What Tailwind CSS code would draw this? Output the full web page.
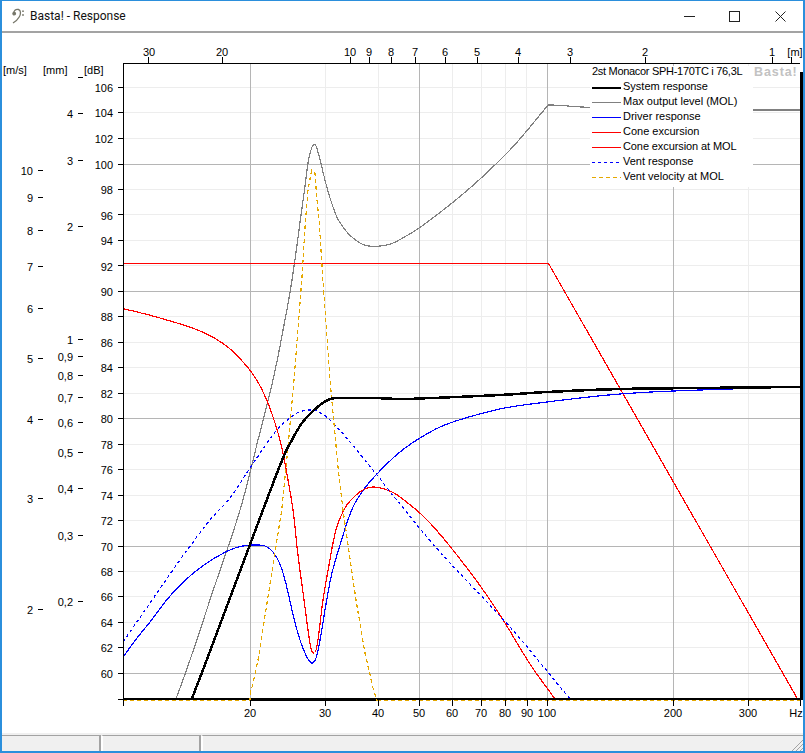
<!DOCTYPE html>
<html>
<head>
<meta charset="utf-8">
<script src="https://cdn.jsdelivr.net/npm/@tailwindcss/browser@4"></script>
<title>Basta! - Response</title>
</head>
<body class="bg-white">
<div class="w-[805px] h-[753px] flex flex-col overflow-hidden border-x-2 border-t border-b-2 border-[#2b8fdc] bg-white font-['Liberation_Sans',sans-serif] text-black">
  <header class="h-[30px] shrink-0 flex items-center border-b-2 border-[#a3a3a3] box-content">
    <svg class="ml-[9px] w-[14px] h-[16px]" viewBox="0 0 14 16" fill="none" stroke="#77776a" stroke-width="1.3"><path d="M3 6 C2 2.5 5 .8 7.5 1.5 C10 2.2 10 6 8.2 9 C6.5 12 4.5 13.5 2 15"/><circle cx="3.2" cy="5.6" r="1.3" fill="#77776a"/><circle cx="12" cy="3.2" r="0.9" fill="#77776a" stroke="none"/><circle cx="12" cy="7" r="0.9" fill="#77776a" stroke="none"/></svg>
    <span class="ml-[5px] text-[12px] font-['Roboto',sans-serif] text-[#111]">Basta! - Response</span>
    <div class="ml-auto flex items-center">
      <svg class="w-[11px] h-[11px] mr-[34px]" viewBox="0 0 11 11"><path d="M0 5.5H11" stroke="#222" shape-rendering="crispEdges"/></svg>
      <svg class="w-[11px] h-[11px] mr-[35px]" viewBox="0 0 11 11"><rect x=".5" y=".5" width="10" height="10" fill="none" stroke="#222" shape-rendering="crispEdges"/></svg>
      <svg class="w-[11px] h-[11px] mr-[17px]" viewBox="0 0 11 11"><path d="M.5 .5L10.5 10.5M10.5 .5L.5 10.5" stroke="#222"/></svg>
    </div>
  </header>
  <main class="flex-1 min-h-0 relative">
    <svg class="block w-[801px] h-[733px] -ml-[2px] -mt-[33px] text-[11px] overflow-visible" viewBox="0 0 801 733">
      <g fill="none" shape-rendering="crispEdges">
        <path stroke="#ededed" d="M123 112.5H800M123 138H800M123 189H800M123 214.5H800M123 240H800M123 265.5H800M123 316.5H800M123 342H800M123 367.5H800M123 393H800M123 444H800M123 469.5H800M123 495H800M123 520.5H800M123 571H800M123 596.5H800M123 622H800M123 647.5H800M123 87.5H800M325.5 63V699M378.5 63V699M452.5 63V699M481 63V699M505.5 63V699M526.5 63V699M748 63V699"/>
        <path stroke="#b5b5b5" d="M123 164H800M123 291H800M123 418.5H800M123 546H800M123 673H800M250.5 63V699M419.5 63V699M547 63V699M673.5 63V699"/>
      </g>
      <g fill="none" shape-rendering="crispEdges" stroke-linejoin="round" stroke-width="1.2">
        <polyline data-smooth stroke="#808080" points="176,699 190,660 215,585 240,510 258,440 273,380 284,325 292,280 301.7,210 305,186 308,163 310,154 312,147 314.3,144.3 316.5,147 318,152 321.7,166.7 326.7,186.7 331,201 336.7,216.7 341,224 346.7,231.7 353,238 360,243 366,245.5 373.3,246.3 380,246 386.7,245 393,243 400,239.5 419,228 452,203 480,179 505,155 522,136.5 546.7,106.7"/>
        <polyline stroke="#808080" points="546.7,106.7 548,105 563,105.3 570,106.3 590,107.5"/>
        <polyline stroke="#808080" points="753,110 800,110"/>
        <polyline stroke="#f00" points="123,263.5 548.5,263.5 797,698"/>
        <polyline data-smooth stroke="#00f" points="123,657 137,638 150,622 170,596 190,576 210,561 230,550 243,546 255,545 265,546 272,551 279,562 285,580 292,610 297,630 301,643 305,653 308,659 312,663 316,658 320,640 326.7,600 332,573 340,545 351.7,510 362,492 376,475 400,452 425,435 450,423 500,409 547,402 620,394 700,390 800,387"/>
        <polyline data-smooth stroke="#f00" points="123,308.5 160,318 200,331 225,345 243,362 256.7,380 266.7,400 273,417 278,433 283,453 288,480 293,510 298,555 304,600 308,630 311,648 313,653 316,650 319,632 323,600 329,565 336,530 345,508 354,497 363,490 373,487 387,490 400,497 430,523 470,572 500,615 530,664 555,699"/>
        <polyline data-smooth stroke="#00f" stroke-dasharray="3 3" points="123,642 150,603 180,560 210,520 230,498 250,468 276.7,430 290,418 300,411.7 313,410 322,414 330,420 346.7,438 373,470 396.7,500 440,552 510,627 570,699"/>
        <path stroke="#000" stroke-width="2" d="M123 699H801"/>
        <path stroke="#000" d="M250 700.5H376"/>
        <polyline stroke="#e5a800" stroke-dasharray="4 3" points="123,700.5 250,700.5 250,695 255,675 258,660 281.7,510 288,447 294,380 302,277 305,227 308,190 311.7,170 315,173 316.7,197 319.3,223 322.7,277 330,380 338,467 343,510 356,600 365,653 373,688 376.7,700.5"/>
        <polyline stroke="#e5a800" stroke-dasharray="4 3" points="376.7,700.5 800,700.5"/>
        <polyline data-smooth stroke="#000" stroke-width="2.5" points="191.7,699 206.7,660 263,510 283,458 293,438 302,423 311,413 320,405 328,400 337,398 373,398 400,399 420,398.5 500,395 547,392 620,389 700,388 800,387"/>
        <path stroke="#000" stroke-width="3" d="M801 72V700"/>
      </g>
      <rect x="590" y="66" width="163" height="121" fill="#fff"/>
      <path fill="none" stroke="#000" shape-rendering="crispEdges" d="M123.5 63V706M123 63H800M148.5 57V63M222.5 57V63M350.5 57V63M369.5 57V63M391.5 57V63M415.5 57V63M445.5 57V63M477.5 57V63M518.5 57V63M570.5 57V63M645.5 57V63M772.5 57V63M791.5 57V63M250.5 700V706M325.5 700V706M378.5 700V706M419.5 700V706M452.5 700V706M481.5 700V706M505.5 700V706M527.5 700V706M547.5 700V706M673.5 700V706M748.5 700V706M800.5 700V706M118 87.5H123M118 112.5H123M118 138.5H123M118 164.5H123M118 189.5H123M118 214.5H123M118 240.5H123M118 265.5H123M118 291.5H123M118 316.5H123M118 342.5H123M118 367.5H123M118 393.5H123M118 418.5H123M118 444.5H123M118 469.5H123M118 495.5H123M118 520.5H123M118 546.5H123M118 571.5H123M118 596.5H123M118 622.5H123M118 647.5H123M118 673.5H123M118 699.5H123M78 113.5H83M78 160.5H83M78 226.5H83M78 339.5H83M78 356.5H83M78 375.5H83M78 397.5H83M78 422.5H83M78 452.5H83M78 488.5H83M78 535.5H83M78 601.5H83M38 170.5H43M38 197.5H43M38 230.5H43M38 266.5H43M38 308.5H43M38 358.5H43M38 419.5H43M38 498.5H43M38 609.5H43M78 77.5H83"/>
      <g fill="#000" text-anchor="end" transform="translate(0 1)">
        <text x="113" y="91">106</text><text x="113" y="116">104</text><text x="113" y="142">102</text><text x="113" y="168">100</text><text x="113" y="193">98</text><text x="113" y="219">96</text><text x="113" y="244">94</text><text x="113" y="270">92</text><text x="113" y="295">90</text><text x="113" y="320">88</text><text x="113" y="346">86</text><text x="113" y="371">84</text><text x="113" y="397">82</text><text x="113" y="422">80</text><text x="113" y="448">78</text><text x="113" y="473">76</text><text x="113" y="499">74</text><text x="113" y="524">72</text><text x="113" y="550">70</text><text x="113" y="575">68</text><text x="113" y="600">66</text><text x="113" y="626">64</text><text x="113" y="651">62</text><text x="113" y="677">60</text>
        <text x="73" y="117">4</text><text x="73" y="164">3</text><text x="73" y="230">2</text><text x="73" y="343">1</text><text x="73" y="360">0,9</text><text x="73" y="379">0,8</text><text x="73" y="401">0,7</text><text x="73" y="426">0,6</text><text x="73" y="456">0,5</text><text x="73" y="492">0,4</text><text x="73" y="539">0,3</text><text x="73" y="605">0,2</text>
        <text x="33" y="174">10</text><text x="33" y="201">9</text><text x="33" y="234">8</text><text x="33" y="270">7</text><text x="33" y="312">6</text><text x="33" y="362">5</text><text x="33" y="423">4</text><text x="33" y="502">3</text><text x="33" y="613">2</text>
      </g>
      <g fill="#000" text-anchor="middle">
        <text x="149" y="56">30</text><text x="222" y="56">20</text><text x="350" y="56">10</text><text x="369" y="56">9</text><text x="391" y="56">8</text><text x="415" y="56">7</text><text x="445" y="56">6</text><text x="477" y="56">5</text><text x="518" y="56">4</text><text x="570" y="56">3</text><text x="645" y="56">2</text><text x="772" y="56">1</text><text x="795" y="56">[m]</text>
        <text x="250" y="717">20</text><text x="325" y="717">30</text><text x="378" y="717">40</text><text x="419" y="717">50</text><text x="452" y="717">60</text><text x="481" y="717">70</text><text x="505" y="717">80</text><text x="527" y="717">90</text><text x="547" y="717">100</text><text x="673" y="717">200</text><text x="748" y="717">300</text><text x="796" y="717">Hz</text>
      </g>
      <g fill="#000">
        <text x="3" y="74">[m/s]</text><text x="43" y="74">[mm]</text><text x="84" y="74">[dB]</text>
        <text x="592" y="75" letter-spacing="-0.3">2st Monacor SPH-170TC i 76,3L</text>
        <text x="623" y="90">System response</text><text x="623" y="105">Max output level (MOL)</text><text x="623" y="120">Driver response</text><text x="623" y="135">Cone excursion</text><text x="623" y="150" letter-spacing="-0.1">Cone excursion at MOL</text><text x="623" y="165">Vent response</text><text x="623" y="180">Vent velocity at MOL</text>
      </g>
      <text x="754" y="76" fill="#c2c2c2" font-weight="700" font-size="12.5" letter-spacing="0.9">Basta!</text>
      <g fill="none" shape-rendering="crispEdges">
        <path stroke="#000" stroke-width="2" d="M592 87.5H621"/>
        <path stroke="#808080" d="M592 102.5H621"/>
        <path stroke="#00f" d="M592 117.5H621"/>
        <path stroke="#f00" d="M592 132.5H621M592 147.5H621"/>
        <path stroke="#00f" stroke-dasharray="3 3" d="M592 162.5H621"/>
        <path stroke="#e5a800" stroke-dasharray="4 3" d="M592 177.5H621"/>
      </g>
    </svg>
  </main>
  <footer class="absolute left-[2px] top-[733px] w-[801px] h-[18px] flex bg-[#f0f0f0] pt-[2px]">
    <div class="w-[99px] border-t border-r-2 border-[#a3a3a3]"></div>
    <div class="w-[100px] border-t border-r-2 border-l-2 border-[#a3a3a3] border-l-white"></div>
    <div class="flex-1 border-t border-l-2 border-[#a3a3a3] border-l-white"></div>
    <svg class="absolute right-0 bottom-0 w-[12px] h-[12px]" viewBox="0 0 12 12" fill="none" stroke="#a3a3a3"><path d="M12 1L1 12M12 5L5 12M12 9L9 12"/></svg>
  </footer>
</div>
<script>
document.querySelectorAll('polyline[data-smooth]').forEach(function (el) {
  var p = el.getAttribute('points').trim().split(/\s+/).map(function (s) { return s.split(',').map(Number); });
  var t = [0];
  for (var i = 1; i < p.length; i++) t[i] = t[i - 1] + Math.sqrt(Math.hypot(p[i][0] - p[i - 1][0], p[i][1] - p[i - 1][1]));
  function tan(i, k) {
    var a = Math.max(i - 1, 0), b = Math.min(i + 1, p.length - 1);
    return (p[b][k] - p[a][k]) / (t[b] - t[a]);
  }
  var out = [];
  for (var i = 0; i < p.length - 1; i++) {
    var h = t[i + 1] - t[i];
    for (var j = 0; j < 8; j++) {
      var u = j / 8, u2 = u * u, u3 = u2 * u;
      var xy = [0, 1].map(function (k) {
        return (2 * u3 - 3 * u2 + 1) * p[i][k] + (u3 - 2 * u2 + u) * h * tan(i, k) + (-2 * u3 + 3 * u2) * p[i + 1][k] + (u3 - u2) * h * tan(i + 1, k);
      });
      out.push(xy[0].toFixed(1) + ',' + xy[1].toFixed(1));
    }
  }
  out.push(p[p.length - 1].join(','));
  el.setAttribute('points', out.join(' '));
});
</script>
</body>
</html>
